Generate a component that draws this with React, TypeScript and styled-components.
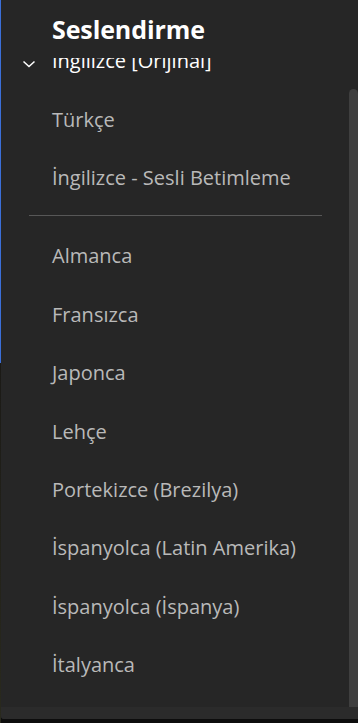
import React from "react"
import styled, { createGlobalStyle } from "styled-components"

const GlobalStyle = createGlobalStyle`
  html, body {
    margin: 0;
    padding: 0;
    background: #0d0d0d;
  }
  body {
    width: 358px;
    height: 723px;
    overflow: hidden;
    font-family: "Open Sans", "Noto Sans", sans-serif;
  }
`

const SPage = styled.div`
  display: flex;
  width: 358px;
  height: 723px;
`

const SEdge = styled.div`
  width: 1px;
  flex-shrink: 0;
  background: linear-gradient(to bottom, #3b6fd8 0, #3b6fd8 363px, #1b1a16 363px, #2a2a1e 100%);
`

const SPanel = styled.div`
  flex: 1;
  height: 719px;
  display: flex;
  flex-direction: column;
  background-color: #262626;
  border-bottom-left-radius: 3px;
  overflow: hidden;
`

const SHeader = styled.div`
  height: 58px;
  flex-shrink: 0;
  padding-left: 51px;
  display: flex;
  align-items: flex-end;
`

const STitle = styled.h2`
  margin: 0;
  padding-bottom: 12px;
  font-size: 25px;
  font-weight: 700;
  color: #ffffff;
  letter-spacing: -0.1px;
`

const SBody = styled.div`
  flex: 1;
  display: flex;
  overflow: hidden;
`

const SList = styled.div`
  flex: 1;
  overflow: hidden;
`

const SListInner = styled.div`
  margin-top: -26.5px;
  display: flex;
  flex-direction: column;
`

const SItem = styled.div<{ $active?: boolean }>`
  position: relative;
  height: 58.4px;
  display: flex;
  align-items: center;
  padding-left: 51px;
  font-size: 20px;
  color: ${({ $active }) => ($active ? "#ffffff" : "#b9b9b9")};
  white-space: nowrap;
`

const SCheck = styled.svg`
  position: absolute;
  left: 21px;
  top: 50%;
  margin-top: -1px;
`

const SDivider = styled.div`
  height: 1px;
  background-color: #575757;
  margin: 8px 27px 11px 28px;
`

const STrack = styled.div`
  width: 9px;
  flex-shrink: 0;
  display: flex;
  flex-direction: column;
  padding-top: 31px;
`

const SThumb = styled.div`
  flex: 1;
  background-color: #3f3f3f;
  border-top-left-radius: 5px;
  border-top-right-radius: 5px;
`

const SFooter = styled.div`
  height: 12px;
  flex-shrink: 0;
  background-color: #2b2b2b;
`

const firstGroup = ["Türkçe", "İngilizce - Sesli Betimleme"]
const secondGroup = [
  "Almanca",
  "Fransızca",
  "Japonca",
  "Lehçe",
  "Portekizce (Brezilya)",
  "İspanyolca (Latin Amerika)",
  "İspanyolca (İspanya)",
  "İtalyanca",
]

const App = () => {
  return (
    <SPage>
      <GlobalStyle />
      <SEdge />
      <SPanel>
        <SHeader>
          <STitle>Seslendirme</STitle>
        </SHeader>
        <SBody>
          <SList>
            <SListInner>
              <SItem $active>
                <SCheck width="14" height="8" viewBox="0 0 14 8">
                  <path d="M1.5 1.5l5.5 5l5.5-5" fill="none" stroke="#ffffff" strokeWidth="1.5" />
                </SCheck>
                İngilizce [Orijinal]
              </SItem>
              {firstGroup.map((name) => (
                <SItem key={name}>{name}</SItem>
              ))}
              <SDivider />
              {secondGroup.map((name) => (
                <SItem key={name}>{name}</SItem>
              ))}
            </SListInner>
          </SList>
          <STrack>
            <SThumb />
          </STrack>
        </SBody>
        <SFooter />
      </SPanel>
    </SPage>
  )
}

export default App
